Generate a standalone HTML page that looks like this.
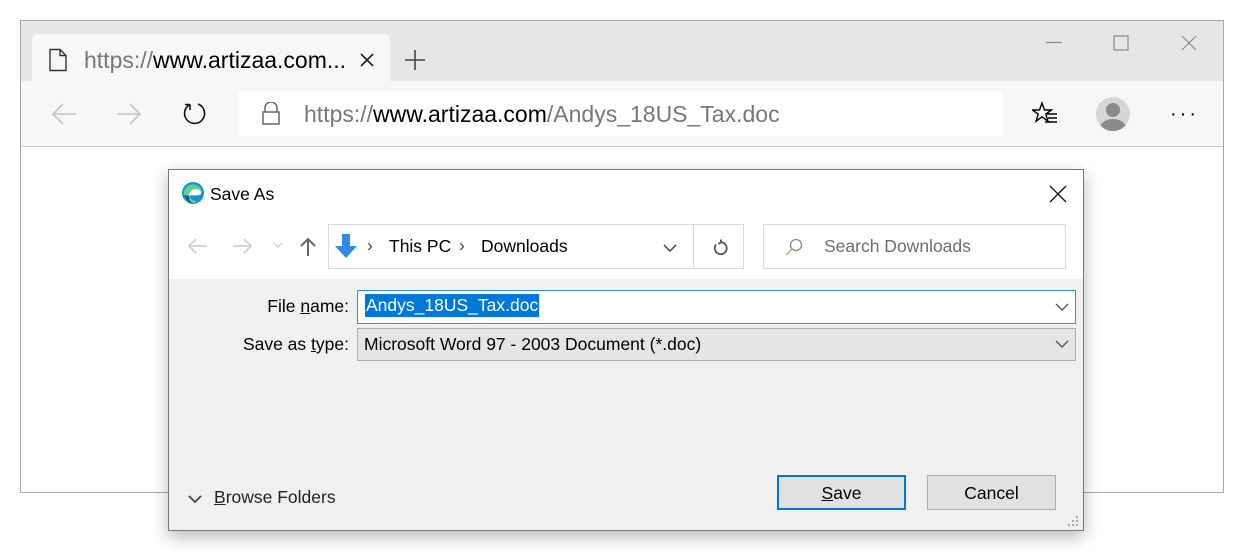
<!DOCTYPE html>
<html><head><meta charset="utf-8"><style>
*{margin:0;padding:0;box-sizing:border-box}
body{width:1247px;height:551px;background:#fff;position:relative;overflow:hidden;font-family:"Liberation Sans",sans-serif;color:#000}
.abs{position:absolute}
.win{left:20px;top:20px;width:1204px;height:473px;border:1px solid #a8a8a8;background:#fff}
.g{color:#777}
.dlg{left:168px;top:169px;width:916px;height:362px;border:1px solid #777;background:#f0f0f0;box-shadow:0 6px 16px rgba(0,0,0,.28)}
.dt{font-size:17.5px;white-space:nowrap}
</style></head><body>
<div class="abs win">
  <div class="abs" style="left:0;top:0;width:1202px;height:60px;background:#e6e6e6"></div>
  <div class="abs" style="left:11px;top:13px;width:358px;height:50px;background:#f7f7f7;border-radius:4px 4px 0 0"></div>
  <svg class="abs" style="left:27px;top:27px" width="20" height="24" viewBox="0 0 20 24"><path d="M2 1.5h10l6 6v15H2z M12 1.5v6h6" fill="none" stroke="#333" stroke-width="1.4"/></svg>
  <div class="abs" style="left:63px;top:26px;font-size:23px;white-space:nowrap"><span class="g">https://</span>www.artizaa.com...</div>
  <svg class="abs" style="left:339px;top:32px" width="14" height="14"><path d="M1 1L13 13M13 1L1 13" stroke="#222" stroke-width="1.6"/></svg>
  <svg class="abs" style="left:383px;top:28px" width="22" height="22"><path d="M11 1v20M1 11h20" stroke="#444" stroke-width="1.6"/></svg>
  <svg class="abs" style="left:1024px;top:20px" width="18" height="4"><path d="M1 1.5h16" stroke="#888" stroke-width="1.2"/></svg>
  <svg class="abs" style="left:1092px;top:14px" width="16" height="16"><rect x="1" y="1" width="14" height="14" fill="none" stroke="#888" stroke-width="1.2"/></svg>
  <svg class="abs" style="left:1160px;top:14px" width="16" height="16"><path d="M1 1L15 15M15 1L1 15" stroke="#888" stroke-width="1.2"/></svg>
  <div class="abs" style="left:0;top:60px;width:1202px;height:66px;background:#f7f7f7;border-bottom:1px solid #ccc"></div>
  <svg class="abs" style="left:30px;top:82px" width="26" height="22"><path d="M2 11h23M12 1L2 11l10 10" fill="none" stroke="#c4c4c4" stroke-width="1.6"/></svg>
  <svg class="abs" style="left:95px;top:82px" width="26" height="22"><path d="M1 11h23M14 1l10 10-10 10" fill="none" stroke="#c4c4c4" stroke-width="1.6"/></svg>
  <svg class="abs" style="left:161px;top:80px" width="26" height="26"><path d="M8 3.5A10 10 0 1 0 16 3M8 3.5V9M8 3.5H3" fill="none" stroke="#111" stroke-width="1.6"/></svg>
  <div class="abs" style="left:217px;top:70px;width:765px;height:45px;background:#fff;border-radius:4px"></div>
  <svg class="abs" style="left:240px;top:81px" width="20" height="24"><path d="M4 10V6a6 6 0 0 1 12 0v4" fill="none" stroke="#666" stroke-width="1.5"/><rect x="2" y="10" width="16" height="12" fill="none" stroke="#666" stroke-width="1.5"/></svg>
  <div class="abs" style="left:283px;top:80px;font-size:23px;white-space:nowrap"><span class="g">https://</span>www.artizaa.com<span class="g">/Andys_18US_Tax.doc</span></div>
  <svg class="abs" style="left:1011px;top:80px" width="26" height="26"><path d="M10 2l2.5 7h7l-5.7 4.2 2.2 7-6-4.3-6 4.3 2.2-7L.5 9h7z" fill="none" stroke="#000" stroke-width="1.4"/><path d="M15 13h10M16 17h9M13 21h12" stroke="#000" stroke-width="1.4"/></svg>
  <div class="abs" style="left:1075px;top:76px;width:34px;height:34px;border-radius:50%;background:#d6d6d6;overflow:hidden">
    <div class="abs" style="left:10px;top:6px;width:14px;height:14px;border-radius:50%;background:#8a8a8a"></div>
    <div class="abs" style="left:4px;top:22px;width:26px;height:18px;border-radius:50% 50% 0 0;background:#8a8a8a"></div>
  </div>
  <div class="abs" style="left:1149px;top:82px;font-size:20px;letter-spacing:3px">&middot;&middot;&middot;</div>
</div>

<div class="abs dlg">
  <div class="abs" style="left:0;top:0;width:914px;height:109px;background:#fff"></div>
  <svg class="abs" style="left:12px;top:11px" width="24" height="24" viewBox="0 0 24 24"><circle cx="12" cy="12" r="11" fill="#1a8fd6"/><path d="M3 14a9 9 0 0 1 18-3c0 3-3 4-6 4H9c0 3 3 5 7 5-2 2-5 3-8 2-3-1-5-4-5-8z" fill="#5ed38a"/><path d="M8 15c0-4 3-7 7-7 3 0 5 2 5 4 0 1-2 2-4 2H9z" fill="#fff"/><path d="M3 14c1 5 5 9 10 9-3-1-5-4-5-8z" fill="#0c5ca8"/></svg>
  <div class="abs dt" style="left:41px;top:14px">Save As</div>
  <svg class="abs" style="left:880px;top:15px" width="18" height="18"><path d="M1 1L17 17M17 1L1 17" stroke="#111" stroke-width="1.3"/></svg>
  <svg class="abs" style="left:19px;top:68px" width="20" height="16"><path d="M1 8h18M8 1L1 8l7 7" fill="none" stroke="#c8c8c8" stroke-width="1.5"/></svg>
  <svg class="abs" style="left:63px;top:68px" width="20" height="16"><path d="M1 8h18M12 1l7 7-7 7" fill="none" stroke="#c8c8c8" stroke-width="1.5"/></svg>
  <svg class="abs" style="left:104px;top:72px" width="10" height="6"><path d="M1 1l4 4 4-4" fill="none" stroke="#c8c8c8" stroke-width="1.2"/></svg>
  <svg class="abs" style="left:131px;top:67px" width="16" height="20"><path d="M8 19V2M1 9l7-7 7 7" fill="none" stroke="#666" stroke-width="2"/></svg>
  <div class="abs" style="left:159px;top:54px;width:416px;height:45px;border:1px solid #d9d9d9;background:#fff"></div>
  <div class="abs" style="left:524px;top:55px;width:1px;height:43px;background:#d9d9d9"></div>
  <svg class="abs" style="left:164px;top:63px" width="26" height="26"><path d="M9 1h8v12h7L13 25 2 13h7z" fill="#2f8ae0"/></svg>
  <div class="abs dt" style="left:198px;top:65px;color:#444">›</div>
  <div class="abs dt" style="left:220px;top:66px">This PC</div>
  <div class="abs dt" style="left:290px;top:65px;color:#444">›</div>
  <div class="abs dt" style="left:312px;top:66px">Downloads</div>
  <svg class="abs" style="left:494px;top:74px" width="14" height="9"><path d="M1 1l6 6 6-6" fill="none" stroke="#444" stroke-width="1.5"/></svg>
  <svg class="abs" style="left:542px;top:68px" width="18" height="18"><path d="M5 5.5a6 6 0 1 0 5-2.3M10 3.2V0.5M10 3.2l-2.5 2" fill="none" stroke="#555" stroke-width="1.8" transform="translate(0 1)"/></svg>
  <div class="abs" style="left:594px;top:54px;width:303px;height:45px;border:1px solid #d9d9d9;background:#fff"></div>
  <svg class="abs" style="left:616px;top:68px" width="18" height="18"><circle cx="11" cy="7" r="5.5" fill="none" stroke="#8a8a8a" stroke-width="1.3"/><path d="M7 11L1 17" stroke="#c9a27a" stroke-width="1.4"/></svg>
  <div class="abs dt" style="left:655px;top:66px;color:#6d6d6d">Search Downloads</div>

  <div class="abs dt" style="right:734px;top:126px">File <u>n</u>ame:</div>
  <div class="abs" style="left:188px;top:120px;width:719px;height:34px;border:1px solid #3a8fd8;background:#fff"></div>
  <div class="abs dt" style="left:196px;top:124px;background:#0078d7;color:#fff;padding:1px 1px 1px">Andys_18US_Tax.doc</div>
  <svg class="abs" style="left:886px;top:133px" width="14" height="9"><path d="M1 1l6 6 6-6" fill="none" stroke="#555" stroke-width="1.4"/></svg>
  <div class="abs dt" style="right:734px;top:164px">Save as <u>t</u>ype:</div>
  <div class="abs" style="left:188px;top:158px;width:719px;height:33px;border:1px solid #adadad;background:#e5e5e5"></div>
  <div class="abs dt" style="left:195px;top:164px">Microsoft Word 97 - 2003 Document (*.doc)</div>
  <svg class="abs" style="left:886px;top:170px" width="14" height="9"><path d="M1 1l6 6 6-6" fill="none" stroke="#555" stroke-width="1.4"/></svg>

  <svg class="abs" style="left:19px;top:325px" width="14" height="9"><path d="M1 1l6 6 6-6" fill="none" stroke="#444" stroke-width="1.8"/></svg>
  <div class="abs dt" style="left:45px;top:317px;color:#222"><u>B</u>rowse Folders</div>
  <div class="abs" style="left:608px;top:305px;width:129px;height:35px;border:2px solid #0078d7;background:#e1e1e1"></div>
  <div class="abs dt" style="left:608px;top:313px;width:129px;text-align:center"><u>S</u>ave</div>
  <div class="abs" style="left:758px;top:305px;width:129px;height:35px;border:1px solid #adadad;background:#e1e1e1"></div>
  <div class="abs dt" style="left:758px;top:313px;width:129px;text-align:center">Cancel</div>
  <svg class="abs" style="left:899px;top:346px" width="12" height="12"><g fill="#aaa"><rect x="8" y="0" width="2" height="2"/><rect x="4" y="4" width="2" height="2"/><rect x="8" y="4" width="2" height="2"/><rect x="0" y="8" width="2" height="2"/><rect x="4" y="8" width="2" height="2"/><rect x="8" y="8" width="2" height="2"/></g></svg>
</div>
</body></html>
